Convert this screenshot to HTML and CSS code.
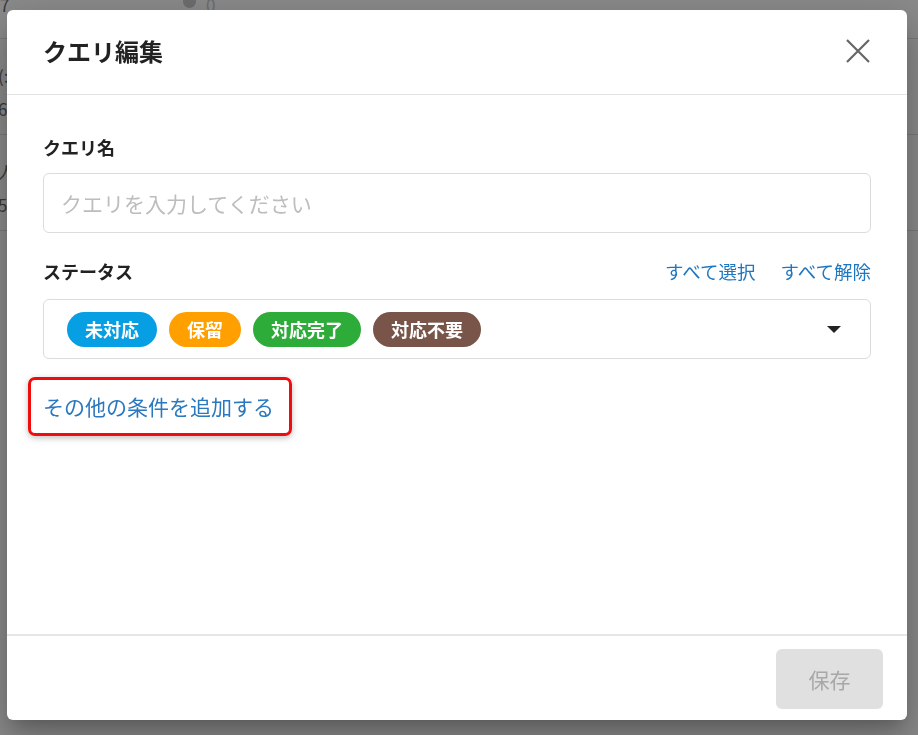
FILE: index.html
```html
<!DOCTYPE html>
<html lang="ja">
<head>
<meta charset="utf-8">
<link rel="stylesheet" href="styles.css">
</head>
<body>
<div class="backdrop">
  <div class="bg-row bg-row-first"><span class="bg-num">7</span><span class="bg-dot"></span><span class="bg-zero">0</span></div>
  <div class="bg-row"><span class="bg-txt">(:<br>6</span></div>
  <div class="bg-row"><span class="bg-txt">人<br>5</span></div>
</div>
<div class="modal">
  <div class="modal-header">
    <h1 class="modal-title">クエリ編集</h1>
    <svg class="close-icon" width="24" height="24" viewBox="0 0 24 24"><path d="M1 1 L23 23 M23 1 L1 23" stroke="#666" stroke-width="2.2" fill="none"/></svg>
  </div>
  <div class="modal-body">
    <div class="field-label">クエリ名</div>
    <div class="text-input">クエリを入力してください</div>
    <div class="status-row">
      <div class="field-label">ステータス</div>
      <div class="status-actions">
        <span class="link-sm">すべて選択</span>
        <span class="link-sm">すべて解除</span>
      </div>
    </div>
    <div class="select-box">
      <div class="chips">
        <span class="chip chip-blue">未対応</span>
        <span class="chip chip-orange">保留</span>
        <span class="chip chip-green">対応完了</span>
        <span class="chip chip-brown">対応不要</span>
      </div>
      <span class="caret"></span>
    </div>
    <div class="more-row"><span class="more-link">その他の条件を追加する</span></div>
  </div>
  <div class="modal-footer">
    <button class="save-btn">保存</button>
  </div>
</div>
</body>
</html>
```

FILE: styles.css
```css
html, body {
  margin: 0;
  padding: 0;
  height: 100%;
}
body {
  background: #8b8b8b;
  font-family: "Noto Sans CJK JP", "Noto Sans", sans-serif;
  overflow: hidden;
}
.backdrop {
  display: flex;
  flex-direction: column;
  color: #3c3c3c;
  font-size: 17px;
}
.bg-row {
  height: 96px;
  border-bottom: 1px solid #7a7a7a;
  position: relative;
  box-sizing: border-box;
}
.bg-row-first {
  height: 39px;
}
.bg-num {
  position: absolute;
  left: 0;
  top: -8px;
}
.bg-dot {
  position: absolute;
  left: 183px;
  top: -5px;
  width: 13px;
  height: 13px;
  border-radius: 50%;
  background: #6e6e6e;
}
.bg-zero {
  position: absolute;
  left: 206px;
  top: -8px;
  color: #6e6e6e;
}
.bg-txt {
  position: absolute;
  left: -2px;
  top: 20px;
  line-height: 33px;
}
.modal {
  position: fixed;
  left: 7px;
  top: 10px;
  width: 900px;
  height: 710px;
  background: #fff;
  border-radius: 6px;
  display: flex;
  flex-direction: column;
  box-shadow: 0 11px 15px -7px rgba(0,0,0,.2), 0 24px 38px 3px rgba(0,0,0,.14), 0 9px 46px 8px rgba(0,0,0,.12);
}
.modal-header {
  height: 85px;
  box-sizing: border-box;
  border-bottom: 1px solid #e2e2e2;
  display: flex;
  align-items: center;
  justify-content: space-between;
  padding: 0 37px 2px 36px;
}
.modal-title {
  margin: 0;
  font-size: 24px;
  font-weight: 700;
  color: #222;
  line-height: 32px;
}
.close-icon {
  display: block;
}
.modal-body {
  flex: 1;
  padding: 40px 36px 0 36px;
  display: flex;
  flex-direction: column;
}
.field-label {
  font-size: 18px;
  font-weight: 700;
  color: #222;
  line-height: 24px;
}
.text-input {
  margin-top: 14px;
  height: 60px;
  box-sizing: border-box;
  border: 1px solid #dcdcdc;
  border-radius: 6px;
  padding: 0 17px;
  display: flex;
  align-items: center;
  font-size: 21px;
  color: #bdbdbd;
}
.status-row {
  margin-top: 26px;
  display: flex;
  justify-content: space-between;
  align-items: center;
  height: 24px;
}
.status-actions {
  display: flex;
  gap: 25px;
}
.link-sm {
  font-size: 18.5px;
  color: #1f77c0;
  line-height: 24px;
}
.select-box {
  margin-top: 16px;
  height: 60px;
  box-sizing: border-box;
  border: 1px solid #dcdcdc;
  border-radius: 6px;
  padding: 0 29px 0 23px;
  display: flex;
  align-items: center;
  justify-content: space-between;
}
.chips {
  display: flex;
  gap: 12px;
}
.chip {
  height: 35px;
  padding: 0 18px;
  border-radius: 18px;
  color: #fff;
  font-size: 18px;
  font-weight: 700;
  display: flex;
  align-items: center;
  line-height: 1;
}
.chip-blue { background: #069fe3; }
.chip-orange { background: #ffa000; }
.chip-green { background: #2eac3a; }
.chip-brown { background: #785548; }
.caret {
  width: 0;
  height: 0;
  border-left: 7px solid transparent;
  border-right: 7px solid transparent;
  border-top: 7px solid #222;
  margin-top: 1px;
}
.more-row {
  margin-top: 32px;
  display: flex;
}
.more-link {
  position: relative;
  font-size: 21px;
  line-height: 30px;
  color: #2a78bd;
  margin-left: 0;
}
.more-link::after {
  content: "";
  position: absolute;
  left: -15px;
  right: -18px;
  top: -14px;
  bottom: -15px;
  border: 3px solid #f00c0c;
  border-radius: 7px;
  box-shadow: 0 2px 6px rgba(0,0,0,.25);
}
.modal-footer {
  border-top: 2px solid #e6e6e6;
  height: 86px;
  box-sizing: border-box;
  display: flex;
  justify-content: flex-end;
  align-items: flex-start;
  padding: 13px 24px 0 0;
}
.save-btn {
  width: 107px;
  height: 60px;
  border: none;
  border-radius: 6px;
  background: #e0e0e0;
  color: #a8a8a8;
  font-family: "Noto Sans CJK JP", "Noto Sans", sans-serif;
  font-size: 21px;
  padding: 0;
}
```
